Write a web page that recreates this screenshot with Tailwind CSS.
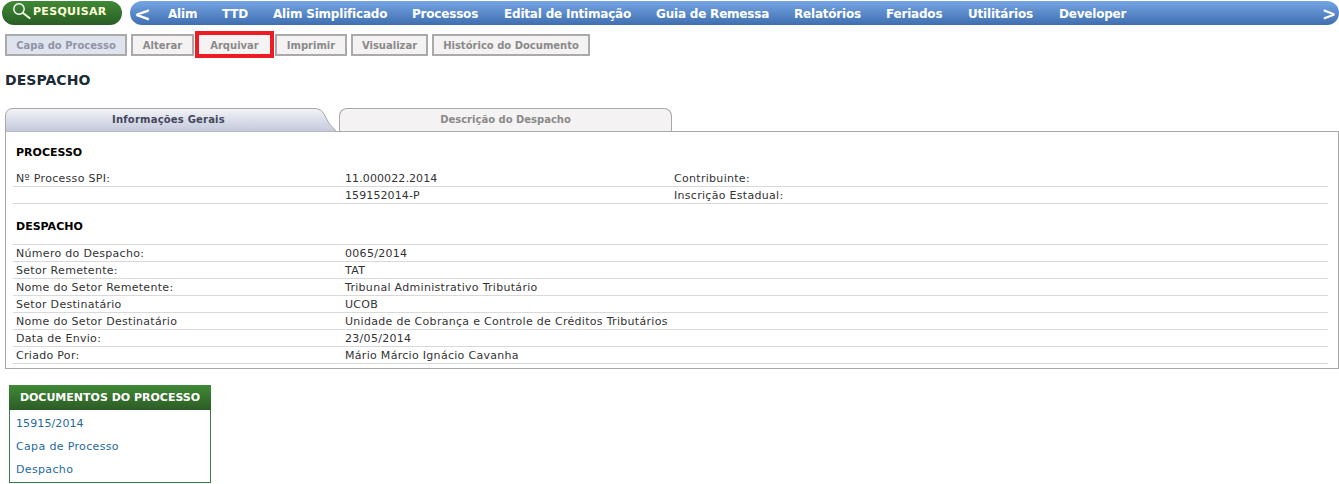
<!DOCTYPE html>
<html lang="pt-BR">
  <head>
    <meta charset="UTF-8" />
    <title>Despacho</title>
    <script src="https://cdn.jsdelivr.net/npm/@tailwindcss/browser@4"></script>
  </head>
  <body class="bg-white h-[484px] overflow-hidden font-['DejaVu_Sans','Liberation_Sans',sans-serif] text-[11px] text-[#333]">
    <!-- barra superior -->
    <header class="flex h-[24px] mt-px pl-[2px]">
      <a class="w-[120px] h-[24px] rounded-full bg-gradient-to-b from-[#3f8a36] to-[#2a5e24] flex items-start pl-[11px] pt-px text-white font-bold text-[11px]">
        <svg width="22" height="20" viewBox="0 0 22 20" fill="none" class="shrink-0">
          <circle cx="6" cy="7" r="5.2" stroke="#fff" stroke-width="1.4" />
          <path d="M10 11 L16.5 16" stroke="#f2f2d8" stroke-width="2.2" stroke-linecap="round" />
        </svg>
        <span class="-ml-[2px] mt-[2px] text-[#ffffd8] tracking-[0.3px]">PESQUISAR</span>
      </a>
      <nav class="ml-[8px] flex-1 h-[24px] rounded-l-[14px] rounded-r-[14px] bg-gradient-to-b from-[#75a5e4] to-[#3f6fb0] flex items-center text-white font-bold text-[12px] tracking-[-0.2px] relative">
        <span class="w-[38px] pl-[4px] text-[20px] font-bold leading-none mt-[1px]">&lt;</span>
        <div class="flex mt-[2px]">
          <span class="w-[54px]">Alim</span>
          <span class="w-[51px]">TTD</span>
          <span class="w-[139px]">Alim Simplificado</span>
          <span class="w-[92px]">Processos</span>
          <span class="w-[152px]">Edital de Intimação</span>
          <span class="w-[138px]">Guia de Remessa</span>
          <span class="w-[92px]">Relatórios</span>
          <span class="w-[82px]">Feriados</span>
          <span class="w-[91px]">Utilitários</span>
          <span>Developer</span>
        </div>
        <span class="absolute right-[3px] top-[3px] text-[17px] leading-[20px]">&gt;</span>
      </nav>
    </header>

    <!-- botões -->
    <div class="flex items-center h-[27px] mt-[6px] pl-[5px] font-bold text-[10px] text-[#8a8a8a]">
      <button class="w-[122px] h-[22px] pt-px border-2 border-[#aaaaaa] bg-[#dfe3ee] text-[#8f94a6]">Capa do Processo</button>
      <button class="w-[63px] h-[22px] pt-px ml-[4px] border-2 border-[#aaaaaa] bg-[#f4f2f2]">Alterar</button>
      <button class="w-[79px] h-[27px] pt-px ml-px border-4 border-[#ed1c24] bg-[#f4f2f2]">Arquivar</button>
      <button class="w-[72px] h-[22px] pt-px ml-px border-2 border-[#aaaaaa] bg-[#f4f2f2]">Imprimir</button>
      <button class="w-[77px] h-[22px] pt-px ml-[4px] border-2 border-[#aaaaaa] bg-[#f4f2f2]">Visualizar</button>
      <button class="w-[158px] h-[22px] pt-px ml-[4px] border-2 border-[#aaaaaa] bg-[#f4f2f2]">Histórico do Documento</button>
    </div>

    <h1 class="pl-[5px] mt-[13px] h-[18px] text-[14px] leading-[18px] font-bold text-[#1c2a3a] tracking-[0.05px]">DESPACHO</h1>

    <!-- abas -->
    <div class="flex h-[23px] mt-[19px] pl-[5px]">
      <div class="relative w-[331px] h-[23px]">
        <svg class="absolute inset-0" width="331" height="24" viewBox="0 0 331 24">
          <defs>
            <linearGradient id="abaAtiva" x1="0" y1="0" x2="0" y2="1">
              <stop offset="0" stop-color="#f3f4f8" />
              <stop offset="1" stop-color="#c2c7da" />
            </linearGradient>
          </defs>
          <path d="M0.5 24 V8 Q0.5 0.5 8 0.5 H311 Q316 0.5 319 6 Q323 16 331 23 V24 Z" fill="url(#abaAtiva)" stroke="#a8a8a8" />
        </svg>
        <span class="absolute left-0 w-[327px] top-[4px] text-center font-bold text-[10px] tracking-[0.2px] text-[#44475c]">Informações Gerais</span>
      </div>
      <div class="ml-[3px] w-[333px] h-[23px] border border-b-0 border-[#a8a8a8] rounded-t-[8px] bg-[#f4f2f2] text-center font-bold text-[10px] pt-[3px] text-[#8a8a8a]">Descrição do Despacho</div>
    </div>

    <!-- painel -->
    <section class="ml-[5px] h-[238px] border border-[#a8a8a8] pl-[7px] pr-[10px] tracking-[0.3px]">
      <h2 class="pl-[3px] pt-[13px] h-[38px] font-bold text-black tracking-normal">PROCESSO</h2>
      <div class="grid grid-cols-[329px_329px_1fr] h-[17px] pl-[3px] leading-[17px] border-b border-[#d9d9d9]">
        <span>Nº Processo SPI:</span><span class="tracking-[0.1px]">11.000022.2014</span><span>Contribuinte:</span>
      </div>
      <div class="grid grid-cols-[329px_329px_1fr] h-[17px] pl-[3px] leading-[17px] border-b border-[#d9d9d9]">
        <span></span><span class="tracking-[0.1px]">159152014-P</span><span>Inscrição Estadual:</span>
      </div>
      <h2 class="pl-[3px] pt-[15px] h-[41px] font-bold text-black tracking-normal border-b border-[#d9d9d9]">DESPACHO</h2>
      <div class="grid grid-cols-[329px_1fr] h-[17px] pl-[3px] leading-[17px] border-b border-[#d9d9d9]">
        <span>Número do Despacho:</span><span>0065/2014</span>
      </div>
      <div class="grid grid-cols-[329px_1fr] h-[17px] pl-[3px] leading-[17px] border-b border-[#d9d9d9]">
        <span>Setor Remetente:</span><span>TAT</span>
      </div>
      <div class="grid grid-cols-[329px_1fr] h-[17px] pl-[3px] leading-[17px] border-b border-[#d9d9d9]">
        <span>Nome do Setor Remetente:</span><span>Tribunal Administrativo Tributário</span>
      </div>
      <div class="grid grid-cols-[329px_1fr] h-[17px] pl-[3px] leading-[17px] border-b border-[#d9d9d9]">
        <span>Setor Destinatário</span><span>UCOB</span>
      </div>
      <div class="grid grid-cols-[329px_1fr] h-[17px] pl-[3px] leading-[17px] border-b border-[#d9d9d9]">
        <span>Nome do Setor Destinatário</span><span>Unidade de Cobrança e Controle de Créditos Tributários</span>
      </div>
      <div class="grid grid-cols-[329px_1fr] h-[17px] pl-[3px] leading-[17px] border-b border-[#d9d9d9]">
        <span>Data de Envio:</span><span>23/05/2014</span>
      </div>
      <div class="grid grid-cols-[329px_1fr] h-[17px] pl-[3px] leading-[17px] border-b border-[#d9d9d9]">
        <span>Criado Por:</span><span>Mário Márcio Ignácio Cavanha</span>
      </div>
    </section>

    <!-- documentos -->
    <aside class="ml-[9px] mt-[16px] w-[202px] h-[98px] border border-[#3a7d4a]">
      <h3 class="h-[25px] -mx-px -mt-px bg-gradient-to-b from-[#3f8a36] to-[#2d5c26] text-white font-bold text-[11px] leading-[25px] text-center">DOCUMENTOS DO PROCESSO</h3>
      <ul class="pl-[6px] pt-[2px] text-[#1f6aa0] tracking-[0.35px]">
        <li class="h-[23px] leading-[23px] tracking-[0.1px]">15915/2014</li>
        <li class="h-[23px] leading-[23px]">Capa de Processo</li>
        <li class="h-[23px] leading-[23px]">Despacho</li>
      </ul>
    </aside>
  </body>
</html>
